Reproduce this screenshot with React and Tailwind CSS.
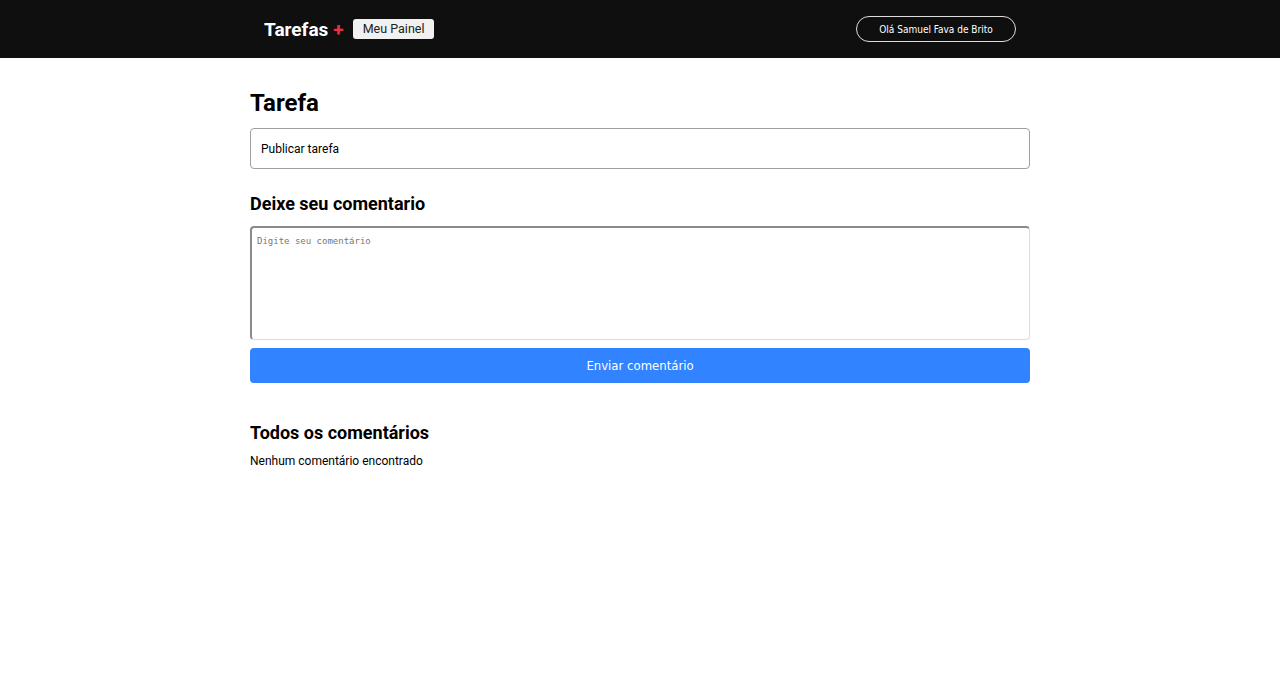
export default function App() {
  return (
    <div className="min-h-screen bg-white" style={{ fontFamily: "Roboto, sans-serif" }}>
      <header className="h-[58px] bg-[#0f0f0f] flex items-center">
        <div className="w-[752px] mx-auto flex items-center justify-between">
          <div className="flex items-center">
            <span className="text-white text-[19px] font-bold leading-none">Tarefas</span>
            <span className="text-[#ea3140] text-[19px] font-bold leading-none ml-[5px]">+</span>
            <button className="ml-[9px] h-[20px] px-[10px] bg-[#f1f1f1] rounded-[3px] text-[12.5px] text-[#222] leading-none" style={{ fontFamily: "Roboto, sans-serif" }}>Meu Painel</button>
          </div>
          <div className="h-[26px] w-[160px] rounded-full border border-[#ddd] flex items-center justify-center text-white text-[10px]" style={{ fontFamily: '"DejaVu Sans Condensed", "DejaVu Sans", sans-serif' }}>Olá Samuel Fava de Brito</div>
        </div>
      </header>
      <main className="w-[780px] mx-auto pt-[31px]">
        <h1 className="text-[24px] font-bold leading-[28px] text-black">Tarefa</h1>
        <div className="mt-[11px] h-[41px] border border-[#a0a0a0] rounded-[4px] flex items-center px-[10px] text-[12px] text-black">Publicar tarefa</div>
        <h2 className="mt-[24px] text-[18px] font-bold leading-[22px] text-black">Deixe seu comentario</h2>
        <textarea
          placeholder="Digite seu comentário"
          className="mt-[11px] block w-full h-[114px] rounded-[4px] border-t-2 border-l-2 border-r border-b border-t-[#8a8a8a] border-l-[#8a8a8a] border-r-[#dcdcdc] border-b-[#dcdcdc] px-[5px] pt-[7px] text-[9px] resize-none placeholder:text-[#777] outline-none"
          style={{ fontFamily: '"DejaVu Sans Mono", monospace' }}
        />
        <button className="mt-[8px] w-full h-[35px] bg-[#3183ff] rounded-[4px] text-[13px] text-white" style={{ fontFamily: '"DejaVu Sans Condensed", "DejaVu Sans", sans-serif' }}>Enviar comentário</button>
        <h2 className="mt-[39px] text-[18px] font-bold leading-[22px] text-black">Todos os comentários</h2>
        <p className="mt-[8px] text-[12px] text-black">Nenhum comentário encontrado</p>
      </main>
    </div>
  );
}
